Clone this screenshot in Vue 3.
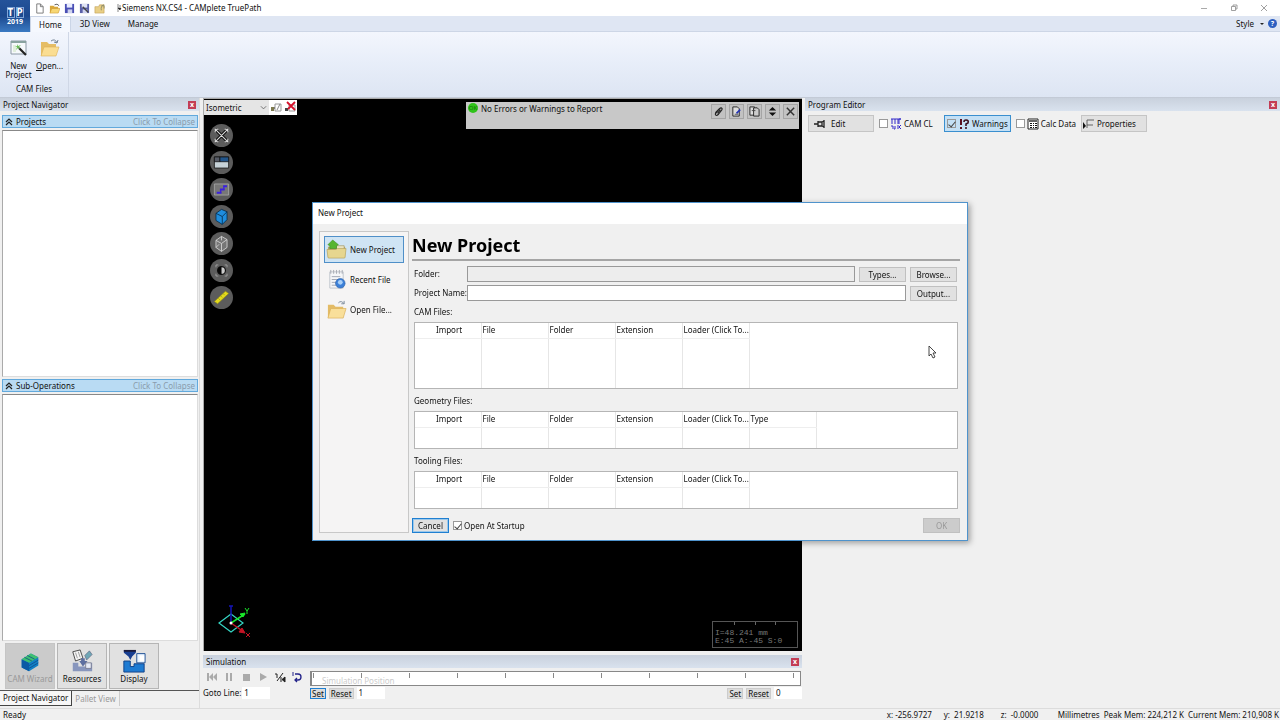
<template>
  <div class="app">
    <!-- title bar + ribbon -->
    <header class="header">
      <button class="app_btn" aria-label="Application menu">
        <span class="tp"><b>T</b><b>P</b></span>
        <span class="year">2019</span>
      </button>
      <div class="titlebar">
        <div class="quick">
          <button aria-label="New">
            <svg viewBox="0 0 12 12"><path d="M3 1h4l3 3v7H3z" fill="#fff" stroke="#777" /><path d="M7 1v3h3" fill="none" stroke="#777" /></svg>
          </button>
          <button aria-label="Open">
            <svg viewBox="0 0 12 12"><path d="M1 3h4l1 1h4v7H1z" fill="#d9a83a" /><path d="M3 6h9l-2 5H1z" fill="#f7d774" stroke="#c9952c" stroke-width=".6" /><path d="M6 2q3-2 5 1" fill="none" stroke="#555" /></svg>
          </button>
          <button aria-label="Save">
            <svg viewBox="0 0 12 12"><path d="M1 1h10v10H1z" fill="#4a50b5" /><path d="M3 1h6v4H3z" fill="#e8ecff" /><path d="M4 7h5v4H4z" fill="#cfd3ee" /></svg>
          </button>
          <button aria-label="Save as">
            <svg viewBox="0 0 12 12"><path d="M1 1h10v10H1z" fill="#5a60a8" /><path d="M3 1h6v4H3z" fill="#dfe3f5" /><path d="M4 7h5v4H4z" fill="#cfd3ee" /><path d="M4 4l6 6" stroke="#444" stroke-width="1.5" /></svg>
          </button>
          <button aria-label="Close project">
            <svg viewBox="0 0 12 12"><path d="M1 4h4l1-2h5v9H1z" fill="#e9cf86" stroke="#bd9b4b" stroke-width=".6" /><path d="M8 8q-1-5 3-6M8 3h3v3" fill="none" stroke="#8d8d6a" /></svg>
          </button>
        </div>
        <svg class="quick_more" viewBox="0 0 5 10"><path d="M1 1v8" stroke="#888" /><path d="M2 3h2M1 5h3l-1 2z" fill="#222" stroke="#222" stroke-width=".6" /></svg>
        <h1 class="title">Siemens NX.CS4 - CAMplete TruePath</h1>
        <div class="win_btns">
          <button aria-label="Minimize"><svg viewBox="0 0 8 8"><path d="M1 4.500h6" stroke="#aaa" /></svg></button>
          <button aria-label="Restore"><svg viewBox="0 0 8 8"><path d="M1.500 2.500h4v4h-4zM3 2V1h4v4H6" fill="none" stroke="#888" stroke-width=".8" /></svg></button>
          <button aria-label="Close"><svg viewBox="0 0 8 8"><path d="M1 1l6 6M7 1L1 7" stroke="#888" stroke-width=".8" /></svg></button>
        </div>
      </div>
      <nav class="tabs">
        <button v-for="tab in tabs" :key="tab" :class="{ active: tab === activeTab }" @click="activeTab = tab">{{ tab }}</button>
        <div class="style_menu">
          <button class="style_btn">Style <i></i></button>
          <button class="help" aria-label="Help">?</button>
        </div>
      </nav>
    </header>

    <section class="ribbon">
      <div class="group">
        <div class="group_items">
          <button>
            <svg viewBox="0 0 20 20"><path d="M2 3h15v13H2z" fill="#f6f9fc" stroke="#8b98a5" /><path d="M2 3h15v2H2z" fill="#8aa3a0" /><path d="M4 7h3v7H4z" fill="#e1efdc" /><path d="M10 10l7 7" stroke="#222" stroke-width="2.200" /><path d="M8 6l1 2 3-1-2 2 1 2-2-1-2 2 1-3-2-1h2z" fill="#6bbd57" /></svg>
            New<br>Project
          </button>
          <button>
            <svg viewBox="0 0 20 20"><path d="M1 4h6l2 2h7v12H1z" fill="#e5bd65" /><path d="M4 9h15l-3 9H1z" fill="#fadd92" stroke="#dcb055" stroke-width=".6" /><path d="M11 3q4-3 6 2M17 5l1-3M17 5l-3-1" fill="none" stroke="#768596" /></svg>
            <span><u>O</u>pen...</span>
          </button>
        </div>
        <div class="group_name">CAM Files</div>
      </div>
    </section>

    <main class="main">
      <!-- left: navigator -->
      <aside class="navigator">
        <div class="pane_head">
          <h2>Project Navigator</h2>
          <button class="pane_close" aria-label="Close Project Navigator">x</button>
        </div>
        <div class="nav_body">
          <template v-for="section in sections" :key="section">
            <button class="collapse_head">
              <svg viewBox="0 0 8 8"><path d="M1 4l3-3 3 3M1 7l3-3 3 3" fill="none" stroke="#222" stroke-width="1.200" /></svg>
              <span>{{ section }}</span>
              <em>Click To Collapse</em>
            </button>
            <div class="tree"></div>
          </template>
          <div class="nav_tools">
            <button disabled>
              <svg viewBox="0 0 26 26"><path d="M4 11l10-6 8 4v9l-10 6-8-4z" fill="#1280c4" /><path d="M4 11l8 4v9l-8-4z" fill="#0b5aa5" /><path d="M4 11l10-6 8 4-10 6z" fill="#3fc070" /><path d="M7 9l8 4M10 7l8 4M12 18l10-6M12 21l10-6" stroke="#0c468a" stroke-width=".8" /></svg>
              CAM Wizard
            </button>
            <button>
              <svg viewBox="0 0 26 26"><path d="M3 3l8-2 3 9-8 3z" fill="#f4f4f4" stroke="#444" /><path d="M6 4l2 6M9 3l2 6" stroke="#999" /><path d="M16 7l5-5 3 4-6 6z" fill="#6fa6b5" stroke="#557" stroke-width=".6" /><path d="M3 15h6v4h8v-4h7v9H3z" fill="#8896bd" /><path d="M12 10h4v3h3l-5 6-4-6h2z" fill="#5d6fa0" /><path d="M17 15h6v6h-6z" fill="#e6ebf7" stroke="#667" stroke-width=".7" /></svg>
              Resources
            </button>
            <button>
              <svg viewBox="0 0 26 26"><path d="M2 1h13v3l-4 4-2 4-2-4-5-4z" fill="#173e91" /><path d="M2 1h13v2H2z" fill="#1a1a3a" /><path d="M2 13h7v6h4v-3h11v9H2z" fill="#1e7bd2" stroke="#0f3f85" /><path d="M16 5h9v10h-9z" fill="#e8f3ff" stroke="#174a90" /><path d="M19 7h5v6h-5z" fill="#fff" /></svg>
              Display
            </button>
          </div>
        </div>
        <div class="nav_tabs">
          <button class="active">Project Navigator</button>
          <button>Pallet View</button>
        </div>
      </aside>

      <!-- centre: 3d view + simulation -->
      <section class="center">
        <div class="viewport">
          <div class="view_top">
            <div class="view_select">
              <select aria-label="View"><option>Isometric</option></select>
              <button aria-label="Save view">
                <svg viewBox="0 0 12 12"><path d="M5 3h6v7H5z" fill="#fff" stroke="#999" /><path d="M7 9l3-6" stroke="#888" /><path d="M1 6h3v4H1z" fill="#c9c26a" /><path d="M1 7h4M1 9h3" stroke="#333" /></svg>
              </button>
              <button aria-label="Delete view">
                <svg viewBox="0 0 12 12"><path d="M5 4h6v6H5z" fill="#fff" stroke="#999" /><path d="M1 7h3v3H1z" fill="#444" /><path d="M3 1l8 8M11 1L4 8" stroke="#d5112b" stroke-width="1.800" /></svg>
              </button>
            </div>
            <div class="report">
              <span class="ok">OK</span>
              <span class="report_text">No Errors or Warnings to Report</span>
              <button aria-label="Attach"><svg viewBox="0 0 12 12"><path d="M3 8l4-5q2-2 3 0 0 1-1 2L6 9q-2 2-3 1-1-1 0-3l4-4M5 8l3-4" fill="none" stroke="#222" stroke-width="1.200" /></svg></button>
              <button aria-label="Edit report"><svg viewBox="0 0 12 12"><path d="M2 1h5l2 2v8H2z" fill="#ddd" stroke="#222" /><path d="M6 8l4-4" stroke="#2433b5" stroke-width="1.800" /><path d="M4 9h4" stroke="#555" /></svg></button>
              <button aria-label="Copy report"><svg viewBox="0 0 12 12"><path d="M1 1h5v9H1z" fill="#ddd" stroke="#222" /><path d="M5 2h4l2 2v7H5z" fill="#ccc" stroke="#222" /><path d="M3 5h4" stroke="#444" /></svg></button>
              <button aria-label="Resize report"><svg viewBox="0 0 12 12"><path d="M6 1l4 4H2zM6 11L2 7h8z" fill="#111" /></svg></button>
              <button aria-label="Close report"><svg viewBox="0 0 12 12"><path d="M2 2l8 8M10 2l-8 8" stroke="#333" stroke-width="1.600" /></svg></button>
            </div>
          </div>
          <div class="view_tools">
            <button aria-label="Fit view"><svg viewBox="0 0 24 24"><path d="M4 4l16 16M20 4L4 20" stroke="#111" stroke-width="4" /><path d="M4 4l16 16M20 4L4 20M4 8V4h4M16 4h4v4M20 16v4h-4M8 20H4v-4" fill="none" stroke="#ddd" stroke-width="1.300" /></svg></button>
            <button aria-label="Layout"><svg viewBox="0 0 24 24"><path d="M3 5h18v14H3z" fill="#c6d2d8" stroke="#111" /><path d="M3 5h7v6H3z" fill="#555a66" stroke="#111" /><path d="M10 5h11v6H10z" fill="#22568c" stroke="#111" /></svg></button>
            <button aria-label="Toolpath"><svg viewBox="0 0 24 24"><path d="M3 5h18v14H3z" fill="#777" stroke="#aaa" /><path d="M14 8h5M10 12h6M6 16h6" stroke="#3b20e0" stroke-width="2.500" /><path d="M15 8v4M11 12v4" stroke="#3b20e0" stroke-width="1.500" /></svg></button>
            <button aria-label="Shaded"><svg viewBox="0 0 24 24"><path d="M5 8l7-5 7 3v10l-6 6-8-5z" fill="#1f8ddd" stroke="#052846" /><path d="M5 8l8 4 6-6M13 12v10" fill="none" stroke="#052846" /></svg></button>
            <button aria-label="Wireframe"><svg viewBox="0 0 24 24"><path d="M5 8l7-5 7 4v10l-7 5-7-5z" fill="#777" stroke="#ddd" /><path d="M5 8l7 4 7-5M12 12v10M12 3v5M5 17l4-4" fill="none" stroke="#ddd" /></svg></button>
            <button aria-label="Contrast"><svg viewBox="0 0 24 24"><path d="M5 8V5h3M16 5h3v3M19 16v3h-3M8 19H5v-3" fill="none" stroke="#aaa" /><circle cx="12" cy="12" r="5" fill="#ccc" stroke="#111" stroke-width="1.500" /><path d="M12 7a5 5 0 000 10z" fill="#050505" /></svg></button>
            <button aria-label="Measure"><svg viewBox="0 0 24 24"><path d="M3 17L17 4l4 3L7 20z" fill="#e3da1c" stroke="#8e8918" stroke-width=".8" /><path d="M8 13l2 2M11 10l2 2M14 7l2 2" stroke="#8e8918" stroke-width=".8" /></svg></button>
          </div>
          <div class="view_bottom">
            <svg class="axes" viewBox="0 0 38 38">
              <path d="M5 20l12-9 12 9-12 9z" fill="none" stroke="#35d6c4" stroke-width="1.200" />
              <path d="M17 20V3M15 3h4" stroke="#1414b8" stroke-width="1.500" />
              <path d="M17 20L31 11" stroke="#19e629" stroke-width="1.500" /><path d="M31 10l-5 1 3 3z" fill="#19e629" stroke="#19e629" /><path d="M31 5l2 3 2-3M33 8v3" fill="none" stroke="#19e629" />
              <path d="M17 20l13 9" stroke="#c41426" stroke-width="1.500" /><path d="M31 30l-6-1 3-4z" fill="#c41426" stroke="#c41426" /><path d="M32 30l4 4M36 30l-4 4" stroke="#c41426" />
              <circle cx="17" cy="20" r="1.500" fill="#fff" />
            </svg>
            <div class="scale">
              <div class="scale_ticks"><i></i><i></i><i></i></div>
              I=48.241 mm<br>E:45 A:-45 S:0
            </div>
          </div>
        </div>

        <div class="simulation">
          <div class="pane_head">
            <h2>Simulation</h2>
            <button class="pane_close" aria-label="Close Simulation">x</button>
          </div>
          <div class="sim_row">
            <div class="sim_btns">
              <button aria-label="Rewind" disabled><svg viewBox="0 0 12 12"><path d="M1 2h2v8H1zM7 2v8L3 6zM11 2v8L7 6z" fill="#aaa" /></svg></button>
              <button aria-label="Pause" disabled><svg viewBox="0 0 12 12"><path d="M3 2h2v8H3zM7 2h2v8H7z" fill="#aaa" /></svg></button>
              <button aria-label="Stop" disabled><svg viewBox="0 0 12 12"><path d="M3 3h7v7H3z" fill="#aaa" /></svg></button>
              <button aria-label="Play" disabled><svg viewBox="0 0 12 12"><path d="M3 2l7 4-7 4z" fill="#aaa" /></svg></button>
              <button aria-label="Step"><svg viewBox="0 0 12 12"><path d="M1 3h2v4M3 10l6-8" fill="none" stroke="#222" /><path d="M7 6v5M11 6v5L8 8.500z" fill="#222" stroke="#222" /></svg></button>
              <button aria-label="Loop"><svg viewBox="0 0 12 12"><path d="M4 3h3q3 0 3 3t-3 3H4M6 7L4 9l2 2" fill="none" stroke="#232389" stroke-width="1.300" /><path d="M2 1v4" stroke="#232389" /></svg></button>
            </div>
            <div class="track">
              <div class="ticks"><i v-for="n in 11" :key="n"></i></div>
              <label for="position">Simulation Position</label>
              <input id="position" v-model="position" type="range" min="0" max="100">
            </div>
          </div>
          <div class="sim_row">
            <div class="goto">
              <label for="goto">Goto Line:</label>
              <input id="goto" v-model="gotoLine" type="text">
            </div>
            <div class="range">
              <button class="set focus">Set</button>
              <button class="set">Reset</button>
              <input v-model="startLine" type="text" aria-label="Start line">
            </div>
            <div class="range end">
              <button class="set">Set</button>
              <button class="set">Reset</button>
              <input v-model="endLine" type="text" aria-label="End line">
            </div>
          </div>
        </div>
      </section>

      <!-- right: program editor -->
      <section class="editor">
        <div class="pane_head">
          <h2>Program Editor</h2>
          <button class="pane_close" aria-label="Close Program Editor">x</button>
        </div>
        <div class="editor_bar">
          <button class="bar_btn">
            <svg viewBox="0 0 12 12"><path d="M0 6h4M4 3v6M4 4h4v4H4M10 2v8M8 4l2-1M8 8l2 1" fill="none" stroke="#222" stroke-width="1.300" /></svg>
            Edit
          </button>
          <label class="bar_check">
            <input type="checkbox">
            <svg viewBox="0 0 12 12"><path d="M2 1v5M5 1v5M8 1v5M1 8h2v3M5 8v3H4M11 1H9v5M8 7v4M11 7L9 9l2 2M1 1h10" fill="none" stroke="#3328c9" /></svg>
            CAM CL
          </label>
          <label class="bar_check on">
            <input type="checkbox" checked>
            <svg viewBox="0 0 12 12"><path d="M3 1v6M3 9v2" stroke="#5a1020" stroke-width="2" /><path d="M6 4q0-2 2-2 3 0 2 3L8 6v2M8 9v2" fill="none" stroke="#3c1020" stroke-width="1.600" /></svg>
            Warnings
          </label>
          <label class="bar_check">
            <input type="checkbox">
            <svg viewBox="0 0 12 12"><path d="M1 1h10v10H1z" fill="#fff" stroke="#222" /><path d="M2 2h8v2H2z" fill="#666" /><path d="M3 5h2v1H3zM6 5h1v1H6zM8 5h2v1H8zM3 7h2v1H3zM6 7h1v1H6zM8 7h2v1H8zM3 9h2v1H3zM6 9h1v1H6zM8 9h2v1H8z" fill="#111" /></svg>
            Calc Data
          </label>
          <button class="bar_btn">
            <svg viewBox="0 0 12 12"><path d="M0 4l3 4-3 3z" fill="#111" /><path d="M4 10V2h7M4 7h6" fill="none" stroke="#555" stroke-width=".9" /></svg>
            Properties
          </button>
        </div>
      </section>
    </main>

    <footer class="status">
      <span class="ready">Ready</span>
      <span class="cell">x: -256.9727</span>
      <span class="cell">y: &nbsp;21.9218</span>
      <span class="cell">z: &nbsp;-0.0000</span>
      <span class="cell unit">Millimetres</span>
      <span class="cell mem">Peak Mem: 224,212 K</span>
      <span class="cell mem">Current Mem: 210,908 K</span>
    </footer>

    <!-- new project dialog -->
    <div class="overlay">
      <form class="dialog" role="dialog" aria-labelledby="dialog_title" @submit.prevent>
        <div id="dialog_title" class="dialog_title">New Project</div>
        <div class="dialog_body">
          <div class="side">
            <button type="button" class="active">
              <svg viewBox="0 0 22 22"><path d="M2 8h18v11q0 1-1 1H3q-1 0-1-1z" fill="#b5a568" /><path d="M11 7h8v4h-8z" fill="#e9e2c0" stroke="#9d9059" stroke-width=".6" /><path d="M1 11h9l2-1h9l-1 9q0 1-1 1H3q-1 0-1-1z" fill="#e6d68f" stroke="#b5a25b" stroke-width=".7" /><path d="M7 1l6 5-2 1v3H4V7L2 6z" fill="#57b52e" stroke="#3c8f1e" stroke-width=".6" /></svg>
              New Project
            </button>
            <button type="button">
              <svg viewBox="0 0 22 22"><path d="M4 3h14v17H4z" fill="#f5f6f8" stroke="#c0c4cc" /><path d="M5 1v4M8 1v4M11 1v4M14 1v4M17 1v4" stroke="#a9adb5" /><path d="M6 8h9M6 11h9M6 14h5M6 17h5" stroke="#a0a6b3" /><circle cx="15" cy="15" r="5" fill="#3c80d8" stroke="#2459a3" stroke-width=".6" /><circle cx="15" cy="14" r="2.500" fill="#a9d0f8" /></svg>
              Recent File
            </button>
            <button type="button">
              <svg viewBox="0 0 22 22"><path d="M2 6h6l2 2h8v11H2z" fill="#e3bb66" /><path d="M5 10h16l-3 10H2z" fill="#f9df9a" stroke="#d9ae55" stroke-width=".7" /><path d="M13 4q3-3 6 1M19 5V2M19 5l-3 0" fill="none" stroke="#7c8a9a" /></svg>
              Open File...
            </button>
          </div>
          <div class="content">
            <h2>New Project</h2>
            <div class="field">
              <label for="folder">Folder:</label>
              <input id="folder" type="text" readonly>
              <button type="button" class="btn">Types...</button>
              <button type="button" class="btn">Browse...</button>
            </div>
            <div class="field">
              <label for="name">Project Name:</label>
              <input id="name" v-model="projectName" type="text">
              <button type="button" class="btn">Output...</button>
            </div>
            <div v-for="list in lists" :key="list.id" class="list" :class="list.id">
              <div :id="list.id" class="list_name">{{ list.name }}</div>
              <div class="list_box">
                <table :aria-labelledby="list.id">
                  <thead>
                    <tr><th v-for="col in list.columns" :key="col" scope="col">{{ col }}</th></tr>
                  </thead>
                  <tbody>
                    <tr><td v-for="col in list.columns" :key="col"></td></tr>
                  </tbody>
                </table>
              </div>
            </div>
            <div class="actions">
              <button type="button" class="btn cancel">Cancel</button>
              <label><input v-model="openAtStartup" type="checkbox">Open At Startup</label>
              <button class="btn confirm" disabled>OK</button>
            </div>
          </div>
        </div>
        <svg class="cursor" viewBox="0 0 10 14"><path d="M1 1v10l2-2 2 4 2-1-2-4h3z" fill="#fff" stroke="#333" stroke-width=".9" /></svg>
      </form>
    </div>
  </div>
</template>

<script setup>
import { ref } from 'vue';

const tabs = ['Home', '3D View', 'Manage'];
const activeTab = ref('Home');
const sections = ['Projects', 'Sub-Operations'];

const position = ref(0);
const gotoLine = ref('1');
const startLine = ref('1');
const endLine = ref('0');

const projectName = ref('');
const openAtStartup = ref(true);

const columns = ['Import', 'File', 'Folder', 'Extension', 'Loader (Click To...'];
const lists = [
  { id: 'cam', name: 'CAM Files:', columns },
  { id: 'geometry', name: 'Geometry Files:', columns: [...columns, 'Type'] },
  { id: 'tooling', name: 'Tooling Files:', columns }
];
</script>

<style>
body {
  margin: 0;
}
</style>

<style scoped>
.app {
  display: flex;
  flex-direction: column;
  min-height: 100vh;
  overflow: hidden;
  background: #f0f0f0;
  color: #111;
  font: 8px/12px "Noto Sans", "Open Sans", sans-serif;
}

.app * {
  box-sizing: border-box;
}

button,
input,
select {
  margin: 0;
  padding: 0;
  border: 0;
  border-radius: 0;
  background: transparent;
  color: inherit;
  font: inherit;
}

h1,
h2 {
  margin: 0;
  font-size: 8px;
  font-weight: 400;
}

svg {
  display: block;
  flex-shrink: 0;
}

input[type="checkbox"] {
  appearance: none;
  display: grid;
  place-items: center;
  width: 9px;
  height: 9px;
  border: 1px solid #999;
  background: #fff;
}

input[type="checkbox"]:checked::before {
  content: "";
  width: 3px;
  height: 6px;
  border: solid #444;
  border-width: 0 1px 1px 0;
  transform: rotate(40deg);
}

/* ===== header ===== */
.header {
  display: grid;
  grid-template-columns: 30px 1fr;
  grid-template-rows: 16px 16px;
}

.app_btn {
  grid-row: 1 / 3;
  display: flex;
  flex-direction: column;
  align-items: center;
  justify-content: center;
  background: linear-gradient(#24539a, #1c498f 50%, #3b7ac2);
  color: #fff;
}

.tp {
  display: flex;
  gap: 1px;
}

.tp b {
  width: 8px;
  border: 1px solid #7fa5d8;
  font-size: 10px;
  line-height: 9px;
}

.year {
  font-size: 7px;
  line-height: 7px;
  font-weight: 700;
}

.titlebar {
  display: flex;
  align-items: center;
  background: #fff;
}

.quick {
  display: flex;
  gap: 4px;
  padding-left: 4px;
}

.quick svg {
  width: 11px;
  height: 11px;
}

.quick_more {
  width: 5px;
  height: 10px;
  margin-left: 12px;
}

.title {
  flex: 1;
}

.win_btns {
  display: flex;
  gap: 22px;
  padding-right: 12px;
}

.win_btns svg {
  width: 8px;
  height: 8px;
}

.tabs {
  display: flex;
  background: #dfe6f3;
  border-bottom: 1px solid #cdd6e6;
}

.tabs > button {
  padding: 0 9px;
}

.tabs > button.active {
  margin-bottom: -1px;
  padding: 0 8px;
  border: 1px solid #cbd5e6;
  border-bottom: 0;
  background: #f5f8fe;
}

.style_menu {
  display: flex;
  align-items: center;
  gap: 4px;
  margin-left: auto;
  padding-right: 3px;
}

.style_btn {
  display: flex;
  align-items: center;
  gap: 6px;
}

.style_btn i {
  border: 2px solid transparent;
  border-top-color: #222;
  border-bottom: 0;
}

.help {
  width: 9px;
  height: 9px;
  border-radius: 50%;
  background: #2d5fc0;
  color: #fff;
  font-size: 7px;
  font-weight: 700;
  line-height: 9px;
}

/* ===== ribbon ===== */
.ribbon {
  display: flex;
  height: 66px;
  border-bottom: 1px solid #c3cad6;
  background: linear-gradient(#f3f6fd, #e8eef9 45%, #dde5f3);
}

.group {
  display: flex;
  flex-direction: column;
  padding: 6px 3px 2px;
  border-right: 1px solid #cfd7e6;
}

.group_items {
  display: flex;
  flex: 1;
}

.group_items button {
  display: flex;
  flex-direction: column;
  align-items: center;
  width: 31px;
  line-height: 9px;
}

.group_items svg {
  width: 20px;
  height: 20px;
  margin-bottom: 3px;
}

.group_name {
  text-align: center;
}

/* ===== panes ===== */
.main {
  display: grid;
  flex: 1;
  grid-template-columns: 200px minmax(0, 1fr) 475px;
  gap: 3px;
}

.pane_head {
  display: flex;
  align-items: center;
  justify-content: space-between;
  height: 13px;
  padding: 0 3px;
  background: linear-gradient(#c9d1dd, #d9e2ee);
}

.pane_close {
  display: grid;
  place-items: center;
  width: 8px;
  height: 8px;
  background: #c33d54;
  color: #fff;
  font-size: 7px;
  font-weight: 700;
  line-height: 7px;
}

.navigator {
  display: flex;
  flex-direction: column;
  border-right: 1px solid #dcdcdc;
}

.nav_body {
  display: flex;
  flex: 1;
  flex-direction: column;
  gap: 2px;
  padding: 4px 1px 1px 2px;
  border-bottom: 1px solid #555;
}

.collapse_head {
  display: flex;
  align-items: center;
  gap: 3px;
  height: 13px;
  padding: 0 2px;
  border: 1px solid #62a9dc;
  background: #b9dbf3;
}

.collapse_head svg {
  width: 8px;
  height: 8px;
}

.collapse_head em {
  margin-left: auto;
  color: #8a9cac;
  font-style: normal;
}

.tree {
  flex: 1;
  border: 1px solid #ddd;
  border-top-color: #888;
  border-left-color: #aaa;
  background: #fff;
}

.nav_tools {
  display: flex;
  gap: 2px;
  padding-left: 3px;
}

.nav_tools button {
  display: flex;
  flex-direction: column;
  align-items: center;
  width: 50px;
  height: 46px;
  padding-top: 5px;
  border: 1px solid #b5b5b5;
  background: #e1e1e1;
}

.nav_tools button:disabled {
  border-color: #c5c5c5;
  background: #cbcbcb;
  color: #999;
}

.nav_tools svg {
  width: 24px;
  height: 24px;
}

.nav_tabs {
  display: flex;
  height: 17px;
}

.nav_tabs button {
  height: 15px;
  padding: 0 3px;
  border-right: 1px solid #ccc;
  color: #999;
}

.nav_tabs .active {
  border-right: 1px solid #444;
  border-bottom: 1px solid #444;
  background: #f7f7f7;
  color: #111;
}

/* ===== 3d view ===== */
.center {
  display: flex;
  flex-direction: column;
}

.viewport {
  display: flex;
  flex: 1;
  flex-direction: column;
  margin-bottom: 4px;
  border: 1px solid #aaa;
  border-right: 0;
  border-bottom: 0;
  background: #000;
}

.view_top {
  display: flex;
  align-items: flex-start;
  justify-content: space-between;
}

.view_select {
  display: flex;
  margin-top: 1px;
  background: #fff;
}

.view_select select {
  appearance: none;
  width: 65px;
  height: 15px;
  padding: 0 2px;
  background: #e5e5e5 url("data:image/svg+xml,%3Csvg xmlns='http://www.w3.org/2000/svg' viewBox='0 0 8 8'%3E%3Cpath d='M1 2l3 3 3-3' fill='none' stroke='%23666'/%3E%3C/svg%3E") no-repeat right 2px center / 7px 8px;
}

.view_select button {
  width: 14px;
  height: 14px;
  padding: 1px;
}

.report {
  display: flex;
  gap: 3px;
  width: 333px;
  height: 27px;
  margin: 3px 3px 0 0;
  padding: 1px 1px 1px 2px;
  background: #c8c8c8;
}

.ok {
  width: 10px;
  height: 10px;
  border-radius: 50%;
  background: #2fc31a;
  color: #137408;
  font-size: 6px;
  line-height: 10px;
  text-align: center;
}

.report_text {
  flex: 1;
  line-height: 11px;
}

.report button {
  width: 15px;
  height: 15px;
  margin-top: 1px;
  padding: 1px;
  border: 1px solid #a5a5a5;
  background: #c2c2c2;
}

.view_tools {
  display: flex;
  flex: 1;
  flex-direction: column;
  align-items: flex-start;
  gap: 4px;
  padding-left: 6px;
}

.view_tools button {
  width: 23px;
  height: 23px;
  border-radius: 50%;
  padding: 2px;
  background: #5c5c5c;
}

.view_tools button:first-child {
  margin-top: -5px;
}

.view_bottom {
  display: flex;
  align-items: flex-end;
  justify-content: space-between;
  padding: 0 4px 3px 10px;
}

.axes {
  width: 38px;
  height: 38px;
  margin-bottom: 7px;
}

.scale {
  width: 86px;
  height: 27px;
  padding: 0 2px;
  border: 1px solid #555;
  color: #777;
  font: 8px/8px "Liberation Mono", monospace;
}

.scale_ticks {
  display: flex;
  justify-content: space-evenly;
  height: 7px;
}

.scale_ticks i {
  width: 1px;
  height: 3px;
  background: #666;
}

/* ===== simulation ===== */
.simulation .pane_head {
  margin-bottom: 3px;
}

.simulation {
  padding-bottom: 9px;
}

.sim_row {
  display: flex;
}

.sim_btns {
  display: flex;
  flex: 0 0 107px;
  align-items: flex-start;
  gap: 5px;
  padding-left: 3px;
}

.sim_btns button {
  width: 12px;
  height: 12px;
}

.track {
  position: relative;
  flex: 1;
  height: 15px;
  margin-right: 1px;
  border: 1px solid #888;
  border-left-width: 2px;
  background: #fff;
}

.ticks {
  display: flex;
  justify-content: space-between;
  padding: 1px 6px 0 1px;
}

.ticks i {
  width: 1px;
  height: 5px;
  background: #888;
}

.track label {
  position: absolute;
  top: 3px;
  left: 10px;
  color: #ccc;
}

.track input {
  position: absolute;
  inset: 0;
  opacity: 0;
}

.goto {
  display: flex;
  flex: 0 0 107px;
  align-items: center;
}

.simulation input[type="text"] {
  width: 28px;
  height: 12px;
  padding: 0 2px;
  background: #fff;
}

.goto input[type="text"] {
  margin-left: 1px;
}

.range {
  display: flex;
  align-items: center;
  gap: 3px;
  padding-top: 1px;
}

.range.end {
  margin-left: auto;
}

.set {
  height: 11px;
  padding: 0 1px;
  border: 1px solid #ccc;
  background: #dcdcdc;
  line-height: 9px;
}

.set.focus {
  border-color: #1f7fd1;
}

/* ===== program editor ===== */
.editor_bar {
  display: flex;
  align-items: center;
  gap: 5px;
  padding: 4px 3px;
}

.editor_bar svg {
  width: 12px;
  height: 12px;
}

.bar_btn {
  display: flex;
  align-items: center;
  gap: 5px;
  width: 66px;
  height: 17px;
  padding: 0 5px;
  border: 1px solid #c5c5c5;
  background: #e1e1e1;
}

.bar_check {
  display: flex;
  align-items: center;
  gap: 2px;
  min-width: 60px;
  height: 17px;
}

.bar_check.on {
  min-width: 66px;
  padding: 0 2px;
  border: 1px solid #3a8fcf;
  background: #c4e0f5;
}

.bar_check.on input {
  background: #c4e0f5;
}

.bar_btn:last-child {
  gap: 2px;
  padding: 0 1px;
}

/* ===== status bar ===== */
.status {
  display: flex;
  height: 12px;
  border-top: 1px solid #dcdcdc;
  white-space: nowrap;
}

.ready {
  flex: 1;
  padding-left: 3px;
}

.cell {
  width: 57px;
}

.cell.unit {
  width: 46px;
}

.cell.mem {
  width: auto;
  padding-right: 4px;
}

.cell.mem:last-child {
  padding-right: 1px;
}

/* ===== dialog ===== */
.overlay {
  position: fixed;
  inset: 0;
  display: grid;
  place-items: center;
  padding-top: 23px;
}

.dialog {
  position: relative;
  width: 656px;
  border: 1px solid #4f93cc;
  background: #f0f0f0;
  box-shadow: 2px 2px 6px rgba(0, 0, 0, 0.35);
}

.dialog_title {
  height: 21px;
  padding: 0 5px;
  background: #fff;
  line-height: 20px;
}

.dialog_body {
  display: flex;
  gap: 3px;
  padding: 7px 7px 7px 6px;
}

.side {
  display: flex;
  flex: 0 0 90px;
  flex-direction: column;
  gap: 3px;
  padding: 4px;
  border: 1px solid #c8c8c8;
  background: #f5f4f4;
}

.side button {
  display: flex;
  align-items: center;
  gap: 3px;
  height: 27px;
  padding: 0 1px;
  border: 1px solid transparent;
  white-space: nowrap;
}

.side button.active {
  border-color: #4f8fc8;
  background: #cfe4f4;
}

.side svg {
  width: 21px;
  height: 21px;
}

.content {
  flex: 1;
}

.content h2 {
  height: 30px;
  border-bottom: 2px solid #a5a5a5;
  color: #000;
  font-size: 18px;
  font-weight: 700;
  line-height: 28px;
}

.field {
  display: flex;
  align-items: flex-end;
  gap: 4px;
  margin: 5px 3px 0 2px;
}

.field label {
  width: 49px;
  line-height: 16px;
  white-space: nowrap;
}

.field input {
  flex: 1;
  height: 16px;
  padding: 0 3px;
  border: 1px solid #999;
  background: #fff;
}

.field input:read-only {
  background: #ededed;
}

.field + .field {
  margin-top: 3px;
}

.btn {
  width: 47px;
  height: 15px;
  border: 1px solid #c0c0c0;
  background: #e1e1e1;
  line-height: 12px;
}

.list {
  margin: 6px 2px 0;
}

.list.cam {
  margin-top: 5px;
}

.list_name {
  height: 16px;
}

.list_box {
  display: flex;
  height: 38px;
  border: 1px solid #b5b5b5;
  background: #fff;
}

.cam .list_box {
  height: 67px;
}

table {
  border-collapse: collapse;
}

th,
td {
  width: 67px;
  min-width: 67px;
  max-width: 67px;
  padding: 0 0 0 1px;
  border-right: 1px solid #e6e6e6;
  font-weight: 400;
  text-align: left;
  white-space: nowrap;
}

th {
  height: 15px;
  border-bottom: 1px solid #eee;
}

th:first-child,
td:first-child {
  width: 66px;
  min-width: 66px;
}

th:first-child {
  padding-left: 21px;
}

.actions {
  display: flex;
  align-items: center;
  gap: 4px;
  margin-top: 9px;
}

.actions label {
  display: flex;
  align-items: center;
  gap: 2px;
}

.actions .btn {
  width: 37px;
}

.actions .cancel {
  border: 1px solid #1f7fd1;
  outline: 1px solid #9cc8ea;
  outline-offset: -2px;
}

.actions .confirm {
  margin-left: auto;
  background: #cccccc;
  color: #999;
}

.cursor {
  position: absolute;
  top: 142px;
  right: 29px;
  width: 10px;
  height: 14px;
}
</style>
